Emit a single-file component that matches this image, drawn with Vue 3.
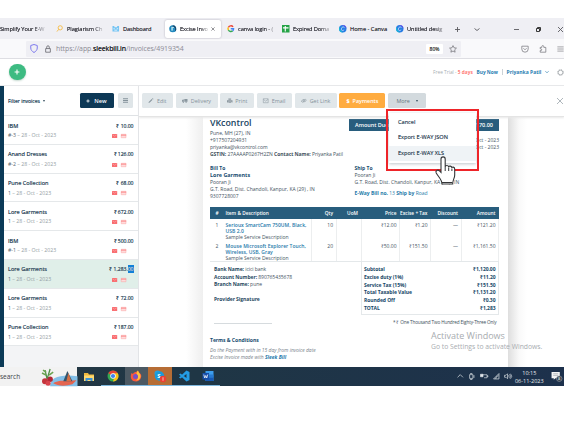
<script setup>
const tabs = [
  { icon: 'none', text: 'Simplify Your E-W', cls: 't0' },
  { icon: 'mag', text: 'Plagiarism Ch', cls: 't1' },
  { icon: 'dash', text: 'Dashboard', cls: 't2' },
  { icon: 'bill', text: 'Excise Invo', cls: 't3 active' },
  { icon: 'google', text: 'canva login - (', cls: 't4' },
  { icon: 'sheet', text: 'Expired Doma', cls: 't5' },
  { icon: 'canva', text: 'Home - Canva', cls: 't6' },
  { icon: 'canva', text: 'Untitled desig', cls: 't7' },
]
const invoices = [
  { name: 'IBM', no: '#-3', amount: '10.00' },
  { name: 'Anand Dresses', no: '#-2', amount: '126.00' },
  { name: 'Pune Collection', no: '1', amount: '68.00' },
  { name: 'Lore Garments', no: '1', amount: '672.00' },
  { name: 'IBM', no: '#-1', amount: '500.00' },
  { name: 'Lore Garments', no: '1', amount: '1,283.', picked: '00' },
  { name: 'Lore Garments', no: '1', amount: '72.00' },
  { name: 'Pune Collection', no: '1', amount: '187.00' },
]
const items = [
  { n: 1, a: 'Serioux SmartCam 750UM, Black,', b: 'USB 2.0', qty: 10, price: '₹12.00', tax: '₹1.20', total: '₹121.20' },
  { n: 2, a: 'Mouse Microsoft Explorer Touch,', b: 'Wireless, USB, Gray', qty: 20, price: '₹50.00', tax: '₹151.50', total: '₹1,161.50' },
]
const totals = [
  ['Subtotal', '₹1,120.00'],
  ['Excise duty (1%)', '₹11.20'],
  ['Service Tax (15%)', '₹151.50'],
  ['Total Taxable Value', '₹1,131.20'],
  ['Rounded Off', '₹0.30'],
  ['TOTAL', '₹1,283'],
]
</script>

<template>
  <div class="screen">
    <div class="tabs">
      <div v-for="(t, i) in tabs" :key="i" class="tab" :class="t.cls">
        <svg v-if="t.icon !== 'none'" class="fav" viewBox="0 0 16 16">
          <g v-if="t.icon === 'mag'" fill="none" stroke="#f5bd4a" stroke-width="2"><circle cx="9" cy="6" r="4.5" /><path d="M6 9l-4 5" /></g>
          <g v-if="t.icon === 'dash'"><path d="M1 2h4v3h6V2h4v12H1z" fill="#74c4f3" /><path d="M3 8h3M10 8h3M5 11h6" stroke="#fff" stroke-width="1.6" /></g>
          <g v-if="t.icon === 'bill'"><circle cx="8" cy="8" r="7.5" fill="#2087bb" /><path d="M8 .5a7.5 7.5 0 0 1 5 13L8 8z" fill="#15456c" /><path d="M5 4h6v8H5z" fill="#bfe9f3" /><path d="M8 6h5v8H8z" fill="#278dc2" /></g>
          <g v-if="t.icon === 'google'" fill="none" stroke-width="3"><path d="M13 4A6 6 0 0 0 3 5" stroke="#ea4335" /><path d="M3 5a6 6 0 0 0 0 6" stroke="#fbbc05" /><path d="M3 11a6 6 0 0 0 9 1.5" stroke="#34a853" /><path d="M12 12.5A6 6 0 0 0 14 8H8" stroke="#4285f4" /></g>
          <g v-if="t.icon === 'sheet'"><path d="M0 0h16v16H0z" fill="#25a346" /><path d="M7 2v12M2 6h12" stroke="#fff" stroke-width="2.4" /></g>
          <g v-if="t.icon === 'canva'"><circle cx="8" cy="8" r="8" fill="#287de4" /><path d="M1 4a8 8 0 0 0 8 12C4 13 2 9 1 4z" fill="#12c1d4" /><path d="M6 .3A8 8 0 0 1 15.9 8C13 3 10 1 6 .3z" fill="#7542e8" /><path d="M11 6c0-4-6-2-6 3 0 4 5 3 6 1" fill="none" stroke="#dff1ff" stroke-width="1.4" /></g>
        </svg>
        <span class="tab-text">{{ t.text }}</span>
        <svg v-if="t.icon === 'bill'" class="close" viewBox="0 0 10 10"><path d="M1 1l8 8M9 1l-8 8" /></svg>
      </div>
      <svg class="wbtn plus" viewBox="0 0 10 10"><path d="M5 0v10M0 5h10" /></svg>
      <svg class="wbtn chev" viewBox="0 0 10 10"><path d="M0 3l5 4 5-4" /></svg>
      <svg class="wbtn min" viewBox="0 0 10 10"><path d="M0 5h10" /></svg>
      <svg class="wbtn max" viewBox="0 0 10 10"><path d="M1 3h6v6H1zM3 3V1h6v6H7" /></svg>
      <svg class="wbtn cls" viewBox="0 0 10 10"><path d="M0 0l10 10M10 0L0 10" /></svg>
    </div>

    <div class="urlbar">
      <div class="field">
        <svg class="shield" viewBox="0 0 16 18"><path d="M8 1l6.5 2v5c0 4-3 7-6.5 9-3.500-2-6.500-5-6.500-9V3z" fill="none" stroke="#7f7bee" stroke-width="2" /></svg>
        <svg class="lock" viewBox="0 0 14 18"><path d="M1.500 8h11v8.500h-11zM4 8V4.500a3 3 0 0 1 6 0V8" fill="none" stroke="#626269" stroke-width="1.800" /></svg>
        <span class="url">https://app.<b>sleekbill.in</b>/invoices/4919354</span>
        <span class="zoom">80%</span>
        <svg class="star" viewBox="0 0 20 20"><path d="M10 1.500l2.600 5.500 6 .8-4.400 4.200 1.100 6-5.300-2.900L4.700 18l1.100-6L1.400 7.800l6-.8z" fill="none" stroke="#66666c" stroke-width="1.700" /></svg>
      </div>
      <svg class="pocket" viewBox="0 0 20 20"><path d="M2 3h16v7a8 8 0 0 1-16 0zM6 8l4 4 4-4" /></svg>
      <svg class="puzzle" viewBox="0 0 20 20"><path d="M3 6h4V4a2.500 2.500 0 0 1 5 0v2h5v12H3v-4h2a2.300 2.300 0 0 0 0-4.500H3z" /></svg>
      <svg class="burger" viewBox="0 0 20 20"><path d="M1 4h18M1 10h18M1 16h18" /></svg>
    </div>

    <header class="apphead">
      <div class="add"><svg viewBox="0 0 10 10"><path d="M5 1v8M1 5h8" /></svg></div>
      <div class="account">
        <span class="trial">Free Trial - <b>5 days</b></span><b class="buy">Buy Now</b><i class="bar"></i><b class="user">Priyanka Patil</b>
        <svg class="uchev" viewBox="0 0 10 10"><path d="M1 3l4 4 4-4" /></svg>
        <svg class="gear" viewBox="0 0 20 20"><circle cx="10" cy="10" r="6.500" /><circle cx="10" cy="10" r="8.500" stroke-dasharray="3.300 3.380" /></svg>
      </div>
    </header>

    <div class="work">
      <div class="rail"></div>
      <aside class="side">
        <div class="sidehead">
          <span class="filter">Filter invoices</span><i class="tri"></i>
          <div class="new"><svg viewBox="0 0 10 10"><path d="M5 1v8M1 5h8" /></svg>New</div>
          <div class="listbtn"><svg viewBox="0 0 10 10"><path d="M0 1.500h10M0 5h10M0 8.500h10" /></svg></div>
        </div>
        <div v-for="(v, i) in invoices" :key="i" class="inv" :class="{ sel: v.picked }">
          <div class="l1"><span>{{ v.name }}</span><span class="amt">₹ {{ v.amount }}<em v-if="v.picked">{{ v.picked }}</em></span></div>
          <div class="l2">
            <span><b>{{ v.no }}</b> – 28 - Oct - 2023</span>
            <span class="marks">
              <svg viewBox="0 0 12 9"><path d="M0 0h12v9H0z" fill="#f9696c" /><path d="M1 2l5 3 5-3" fill="none" stroke="#ffd0d0" /></svg>
              <svg viewBox="0 0 12 9"><path d="M.5.5h11v8H.5z" fill="#ffdcdc" stroke="#fb9999" /><path d="M0 2.500h12" stroke="#f97c7e" stroke-width="2" /></svg>
            </span>
          </div>
        </div>
      </aside>

      <main class="main">
        <div class="toolbar">
          <div class="tb b1"><svg viewBox="0 0 12 12"><path d="M1 11l1-3 6-6 2 2-6 6zM9 1l1-1 2 2-1 1z" /></svg>Edit</div>
          <div class="tb b2"><svg viewBox="0 0 12 12"><path d="M5 2h7v6H5zM0 5l2-2h2v5H0z" /><circle cx="3" cy="9" r="1.500" /><circle cx="9" cy="9" r="1.500" /></svg>Delivery</div>
          <div class="tb b3"><svg viewBox="0 0 12 12"><path d="M3 1h6v3H3zM0 5h12v5h-2V8H2v2H0zM3 9h6v2H3z" /></svg>Print</div>
          <div class="tb b4"><svg viewBox="0 0 12 12"><path d="M.7 1.700h10.600v8.600H.7zM1 3l5 4 5-4" fill="none" stroke="#8a979f" stroke-width="1.200" /></svg>Email</div>
          <div class="tb b5"><svg viewBox="0 0 14 12"><g fill="none" stroke="#8a979f" stroke-width="1.500"><rect x="1" y="4" width="8" height="5" rx="2.500" transform="rotate(-25 5 6)" /><rect x="5" y="3" width="8" height="5" rx="2.500" transform="rotate(-25 9 5)" /></g></svg>Get Link</div>
          <div class="tb b6"><b>$</b>Payments</div>
          <div class="tb b7">More<i class="tri"></i></div>
          <svg class="x" viewBox="0 0 10 10"><path d="M0 0l10 10M10 0L0 10" /></svg>
        </div>

        <div class="canvas">
          <article class="paper">
            <section class="top">
              <div class="from">
                <h1>VKcontrol</h1>
                <p>Pune, MH (27), IN</p><p>+917507204931</p><p>priyanka@vkcontrol.com</p>
                <p class="gst"><b>GSTIN:</b> 27AAAAP0267H2ZN <b>Contact Name:</b> Priyanka Patil</p>
              </div>
              <div class="due">
                <div class="duebar"><span>Amount Due:</span><span>₹1,170.00</span></div>
                <p>28 - Oct - 2023</p><p>28 - Oct - 2023</p>
              </div>
            </section>
            <section class="parties">
              <div class="bill"><p class="hd">Bill To</p><p class="hd nm">Lore Garments</p><p>Pooran Ji</p><p class="addr">G.T. Road, Dist. Chandoli, Kanpur, KA (29) , IN</p><p>9307728007</p></div>
              <div class="ship"><p class="hd">Ship To</p><p>Pooran Ji</p><p class="addr">G.T. Road, Dist. Chandoli, Kanpur, KA (29) , IN</p><p class="way"><b>E-Way Bill no.</b> 13 <b>Ship by</b> Road</p></div>
            </section>
            <section class="grid head"><span class="c">#</span><span class="l">Item &amp; Description</span><span>Qty</span><span>UoM</span><span>Price</span><span>Excise + Tax</span><span>Discount</span><span>Amount</span></section>
            <section v-for="r in items" :key="r.n" class="grid row">
              <span class="c">{{ r.n }}</span>
              <span class="l"><p class="blue">{{ r.a }}</p><p class="blue">{{ r.b }}</p><p>Sample Service Description</p></span>
              <span>{{ r.qty }}</span><span></span><span>{{ r.price }}</span><span>{{ r.tax }}</span><span>—</span><span>{{ r.total }}</span>
            </section>
            <section class="bottom">
              <div class="bank">
                <p><b>Bank Name:</b> icici bank</p><p class="acct"><b>Account Number:</b> 890765435678</p><p><b>Branch Name:</b> pune</p>
                <p class="sign"><b>Provider Signature</b></p>
              </div>
              <div class="totals"><div v-for="t in totals" :key="t[0]" class="tot"><span>{{ t[0] }}</span><span>{{ t[1] }}</span></div></div>
            </section>
            <p class="words">* ₹ One Thousand Two Hundred Eighty-Three Only</p>
            <section class="terms"><p class="hd">Terms &amp; Conditions</p><p class="it">Do the Payment with in 15 day from invoice date</p><p class="it">Excise Invoice made with <b>Sleek Bill</b></p></section>
          </article>
        </div>
      </main>
    </div>

    <footer class="taskbar">
      <div class="search">search</div>
      <svg class="art" viewBox="0 0 36 19">
        <path d="M9 19c0-9 10-12 27-10v10z" fill="#83bfe8" /><path d="M12 16c6-4 16-2 23-3l-4 4c-7 2-14 2-19-1z" fill="#e56550" />
        <path d="M22 14l4-10 5 10z" fill="#34566d" /><path d="M27 6l3 8h-5z" fill="#d67045" />
        <path d="M4 3l2 9M9 2L6 12" stroke="#4f8e46" fill="none" stroke-width="1.300" /><path d="M1 6l4 2M12 5L8 8M2 3l3 2" stroke="#6aa450" stroke-width="1.600" />
        <circle cx="4" cy="14" r="3" fill="#c4343b" /><circle cx="9" cy="12" r="2.700" fill="#b02836" /><circle cx="7" cy="16" r="2.500" fill="#d7434b" />
      </svg>
      <div class="app"><svg viewBox="0 0 24 24"><path d="M2 4h8l2 3h10v13H2z" fill="#eeb83f" /><path d="M2 9h20v11H2z" fill="#ffd970" /><path d="M5 14h14v6h-4v-2H9v2H5z" fill="#3b92d5" /></svg></div>
      <div class="app run"><svg viewBox="0 0 24 24"><circle cx="12" cy="12" r="11" fill="#35a852" /><path d="M2.500 6.500a11 11 0 0 1 19 0L12 12z" fill="#e84336" /><path d="M21.500 6.500A11 11 0 0 1 12 23l3-9-3-7.500z" fill="#fbc116" /><circle cx="12" cy="12" r="5.500" fill="#fff" /><circle cx="12" cy="12" r="4.200" fill="#3f83ed" /></svg></div>
      <div class="app run fire"><svg viewBox="0 0 24 24"><path d="M3 6l3 2c1-3 4-4 6-4 1-1 3-2 4-3 0 3 4 5 6 8 2 6-2 14-10 14S-1 16 3 6z" fill="#fb583d" /><path d="M16 1c1 4 6 7 5 13-1 5-5 7-9 7 5-4 5-9 1-13 0-3 1-5 3-7z" fill="#ffc43c" /><circle cx="11" cy="13" r="5" fill="#7552c9" /></svg></div>
      <div class="app run skype"><svg viewBox="0 0 24 24"><circle cx="7" cy="7" r="6" fill="#279fdc" /><circle cx="11" cy="12" r="9.500" fill="#189bda" /><text x="6.500" y="16" class="ic">S</text><circle cx="18" cy="18" r="6.500" fill="#ed3f34" /><path d="M18 14.500v7" stroke="#fff" stroke-width="1.300" /></svg></div>
      <div class="app run"><svg viewBox="0 0 24 24"><path d="M17 1l6 3v16l-6 3L2 9l3-2 12 9V8L5 17l-3-2z" fill="#249de5" /></svg></div>
      <div class="app run"><svg viewBox="0 0 24 24"><path d="M7 2h16v20H7z" fill="#3d9ded" /><path d="M7 9h16v6H7z" fill="#267ad2" /><path d="M7 15h16v7H7z" fill="#1859b4" /><path d="M1 6h13v13H1z" fill="#164da9" /><path d="M3.500 9l2 7 2-5 2 5 2-7" fill="none" stroke="#fff" stroke-width="1.500" /></svg></div>
      <div class="tray">
        <svg viewBox="0 0 12 12"><path d="M1 8l5-5 5 5" /></svg>
        <svg viewBox="0 0 12 12"><path d="M3 3h6v7H3zM4 1h4M4 12h4M11 4v5" /></svg>
        <svg class="wide" viewBox="0 0 16 12"><path d="M5 3h9v6H8M14 5h2v2h-2" /><path d="M1 2h5v5H1z" fill="#e0e5e9" /></svg>
        <svg viewBox="0 0 12 12"><path d="M1 11L11 1v10zM5 11a6 6 0 0 1 5-6" /></svg>
        <svg class="wide" viewBox="0 0 16 12"><path d="M1 4h3l3-3v10L4 8H1zM9 4q2 2 0 4M11 2q4 4 0 8M13 1q5 5 0 10" /></svg>
      </div>
      <div class="clock"><span>10:15</span><span>06-11-2023</span></div>
      <div class="note"><svg viewBox="0 0 20 20"><path d="M1 2h15v11H8l-3 3v-3H1z" fill="#f4f4f4" /><path d="M4 5h9M4 8h9" stroke="#8b929a" /><circle cx="15" cy="14" r="5" fill="#333e49" stroke="#aab1b8" /><text x="12.800" y="17" class="badge">8</text></svg></div>
    </footer>

    <div class="menu"><div>Cancel</div><div class="json">Export E-WAY JSON</div><div class="hot">Export E-WAY XLS</div></div>
    <div class="redbox"></div>
    <svg class="hand" viewBox="0 0 21 29"><path d="M6 16.500V3a2 2 0 0 1 4.200 0v8c0-2 3.500-2 3.500.3 0-1.800 3.200-1.600 3.200.7 0-1.500 2.800-1.200 2.800 1v6c0 3.500-2 4.500-2 9H7c0-4.500-3.500-7-5.800-11-1.200-2.400 1.800-3.800 3.300-2z" fill="#fff" stroke="#343638" stroke-width="1.100" /><path d="M10.200 11v4M13.700 11.500V15M16.900 12.500V15M7 26.500h10.500" fill="none" stroke="#343638" /></svg>
    <div class="activate"><div class="a1">Activate Windows</div><div class="a2">Go to Settings to activate Windows.</div></div>
  </div>
</template>

<style>
body { margin: 0; background: #fff; }
</style>

<style scoped>
.screen { position: relative; width: 564px; height: 443px; padding-top: 18px; box-sizing: border-box; overflow: hidden; background: #fff; font-family: "Open Sans", sans-serif; color: #43525e; white-space: nowrap; }
.screen * { box-sizing: border-box; }
p, h1 { margin: 0; }
svg { display: block; flex: none; overflow: visible; }

.tabs { height: 21px; background: #efeff4; display: flex; align-items: center; font-size: 5.700px; padding-top: 1px; }
.tab { display: flex; align-items: center; height: 18px; flex: none; color: #3b3b43; text-shadow: 0 0 .3px #3b3b43; }
.fav { width: 7.500px; height: 7.500px; margin-right: 3.500px; }
.tab-text { flex: none; -webkit-mask-image: linear-gradient(90deg, #000 72%, rgba(0, 0, 0, .15)); }
.t0 { width: 56px; } .t0 .tab-text { width: 45px; letter-spacing: -.12px; }
.t1 { width: 56px; } .t1 .tab-text { width: 36px; letter-spacing: -.05px; }
.t2 { width: 53px; } .t2 .tab-text { width: 29px; -webkit-mask-image: none; letter-spacing: -.12px; }
.t3 { width: 56px; padding-left: 4px; margin-right: 6px; } .t3 .tab-text { width: 28px; letter-spacing: -.1px; }
.t4 { width: 55px; } .t4 .tab-text { width: 37px; letter-spacing: -.07px; }
.t5 { width: 57px; } .t5 .tab-text { width: 37px; letter-spacing: -.1px; }
.t6 { width: 57px; } .t6 .tab-text { width: 39px; -webkit-mask-image: none; }
.t7 { width: 59px; } .t7 .tab-text { width: 38px; letter-spacing: -.1px; }
.active { background: #fff; border-radius: 2px; box-shadow: 0 0 2px #aaa9b3; }
.close { width: 4px; height: 4px; margin-left: 2.500px; stroke: #4c4c52; fill: none; stroke-width: 1.500; }
.wbtn { fill: none; stroke: #5a5a60; stroke-width: 1.800; width: 5px; height: 5px; }
.plus { margin-left: -.5px; } .chev { margin-left: 14px; width: 6px; } .min { margin-left: 34.500px; } .max { margin-left: 17px; stroke: #222; } .cls { margin-left: 17px; }

.urlbar { height: 20px; background: #f9f9fb; border-bottom: 1px solid #dedee3; display: flex; align-items: center; }
.field { margin-left: 26px; width: 435px; height: 16px; background: #efeff4; border-radius: 1px; display: flex; align-items: center; }
.shield { width: 8px; height: 9px; margin-left: 4px; } .lock { width: 6px; height: 8px; margin-left: 7px; }
.url { margin-left: 5px; width: 368px; font-size: 6.950px; letter-spacing: -.07px; color: #8b8b94; } .url b { font-weight: 400; color: #25252c; text-shadow: 0 0 .3px #222; }
.zoom { width: 17px; height: 10px; line-height: 10px; background: #fff; text-align: center; font-size: 5px; border-radius: 1px; color: #333; text-shadow: 0 0 .3px #333; margin-left: 2px; }
.star { width: 8px; height: 8px; margin-left: 6px; }
.pocket, .puzzle, .burger { width: 8px; height: 8px; fill: none; stroke: #6c6c72; stroke-width: 1.700; }
.pocket { margin-left: 60px; } .puzzle { margin-left: 10px; } .burger { margin-left: 9.500px; width: 7px; }

.apphead { height: 27px; background: #fff; display: flex; align-items: center; justify-content: space-between; border-bottom: 1px solid #e7e8ea; padding-left: 9px; }
.add { width: 16.500px; height: 16.500px; border-radius: 50%; background: #3dbb82; display: grid; place-items: center; box-shadow: 0 1px 2px #c5d9cf; }
.add svg { width: 6px; height: 6px; stroke: #fff; stroke-width: 1.800; }
.account { display: flex; align-items: center; width: 131px; font-size: 4.800px; color: #a8aeb3; }
.trial { width: 43.500px; } .trial b { color: #ff7b78; } .buy { color: #2a7eb2; width: 25.500px; } .bar { width: 1px; height: 6px; background: #ccd2d6; } .user { color: #2a7eb2; margin-left: 3.500px; width: 38px; font-size: 5px; }
.uchev { width: 4px; height: 4px; stroke: #3987b5; fill: none; stroke-width: 1.800; margin-left: 0; } .gear { width: 7px; height: 7px; stroke: #979ca1; fill: none; stroke-width: 2; margin-left: 8px; }

.work { height: 281px; display: flex; }
.rail { width: 4px; background: #0b3a57; }
.side { width: 134.500px; background: #f3f4f6; border-right: 1px solid #e2e4e7; }
.sidehead { height: 30px; background: #fff; display: flex; align-items: center; padding-left: 4px; border-bottom: 1px solid #dfe2e5; }
.filter { font-size: 5.050px; width: 33.500px; color: #2c495e; text-shadow: 0 0 .3px #2c495e; }
.tri { width: 0; height: 0; border: 1.700px solid transparent; border-top: 2.500px solid #354d5e; border-bottom: 0; margin-left: 1.500px; }
.new { margin-left: 34.500px; width: 34px; height: 15.500px; background: #0d3856; border-radius: 1.500px; color: #fff; display: flex; align-items: center; justify-content: center; gap: 4px; font-size: 5.700px; font-weight: 600; }
.new svg { width: 4px; height: 4px; stroke: #fff; stroke-width: 2; }
.listbtn { margin-left: 4px; width: 15px; height: 15px; background: #dfe5e8; border-radius: 1.500px; display: grid; place-items: center; }
.listbtn svg { width: 5px; height: 5px; stroke: #657681; stroke-width: 1.500; }
.inv { height: 28.800px; background: #fff; border-bottom: 1px solid #e5e8ea; padding: 5.500px 4px 0; }
.sel { background: #e0efe9; }
.l1, .l2 { display: flex; justify-content: space-between; align-items: center; height: 9.600px; line-height: 9.600px; }
.l1 { font-size: 5.600px; color: #344d5f; text-shadow: 0 0 .2px #344d5f; } .amt { font-size: 5.100px; letter-spacing: -.03px; } .amt em { background: #1180d8; color: #fff; font-style: normal; padding: 1px 0; }
.l2 { font-size: 5.200px; color: #939ca3; } .l2 b { font-weight: 400; color: #566570; }
.marks { display: flex; gap: 4px; padding-right: 7.500px; } .marks svg { width: 5.200px; height: 4px; }

.main { flex: 1; min-width: 0; }
.toolbar { position: relative; height: 30.500px; display: flex; align-items: center; padding-left: 3.500px; border-bottom: 1px solid #e4e4e4; box-shadow: 0 1px 2px #e8e8e8; }
.tb { height: 15px; margin-right: 2.700px; background: #e1e7ea; border-radius: 1.500px; display: flex; align-items: center; justify-content: center; gap: 3px; font-size: 5.400px; color: #84919a; }
.tb svg { width: 5.500px; height: 5.500px; fill: #8a979f; }
.b1 { width: 31px; } .b2 { width: 42px; } .b3 { width: 33.500px; } .b4 { width: 35.500px; } .b5 { width: 42px; } .b6 { width: 46px; background: #ffac40; color: #fff; font-weight: 600; } .b7 { width: 38px; background: #d3dade; color: #667680; }
.b7 .tri { margin-left: 3px; }
.x { width: 6px; height: 6px; stroke: #909ba2; stroke-width: 1.200; margin-left: 128px; }

.canvas { height: 250.500px; display: flex; background: linear-gradient(90deg, #fff 0 47px, #efefef 64px, #fff 64px 369px, #dedede 369px, #f9f9f9 380px, #fff 388px); }
.paper { margin-left: 63.500px; width: 305.500px; padding: 1.500px 8.500px 0 8px; font-size: 5px; line-height: 7px; }
.top { display: flex; height: 47px; justify-content: space-between; }
h1 { font-size: 8.800px; line-height: 11px; font-weight: 600; color: #174261; }
.from h1 { margin-bottom: .8px; } .gst { letter-spacing: -.04px; }
.due { width: 150px; text-align: right; line-height: 7.200px; } .duebar { height: 12.500px; line-height: 12.500px; display: flex; justify-content: space-between; background: #285d7d; color: #fff; padding: 0 6px; font-weight: 600; margin: .5px 0 6.200px; font-size: 5.500px; }
.parties { display: grid; grid-template-columns: 144.500px 1fr; height: 42px; } .hd { color: #174d70; font-weight: 700; } .nm { font-size: 5.400px; } .way { color: #257aa9; margin-top: 3.800px; }
.grid { display: grid; grid-template-columns: 14px 87.500px 25px 25px 38.500px 31px 30.500px 37.500px; text-align: right; }
.grid > span { padding-right: 2.500px; border-right: 1px solid #eceeef; } .grid > .c { text-align: center; padding: 0; border: 0; } .grid > .l { text-align: left; padding: 0 0 0 1.500px; }
.head { height: 12px; line-height: 12px; background: #285d7d; color: #fff; font-weight: 600; font-size: 4.800px; } .head > span { border-color: #285d7d; }
.row { height: 20.300px; padding-top: 3.300px; line-height: 6.100px; } .row + .row { height: 23px; border-bottom: 1px solid #e4e8ea; } .row > span { margin-top: -3.300px; padding-top: 3.300px; }
.row > .l, .row > .c { padding-top: 3.300px; } .blue { color: #2679aa; font-weight: 600; letter-spacing: .03px; }
.bottom { display: flex; justify-content: space-between; height: 52.500px; } .bank { padding: 4.200px 0 0 4px; line-height: 7.100px; } .bank b { color: #28495f; font-weight: 700; } .bank .sign { margin-top: 8.200px; width: 58px; height: 28px; border-bottom: 1px solid #d6dbde; }
.bank p { letter-spacing: -.05px; } .bank .sign { margin-bottom: -8px; }
.totals { width: 138.500px; border: 1px solid #e4e8ea; border-top: 0; padding: 4px 2.500px 0; } .tot { display: flex; justify-content: space-between; height: 7.650px; line-height: 7.650px; color: #164667; font-weight: 700; letter-spacing: -.05px; }
.words { text-align: right; padding-right: 2.500px; height: 12px; line-height: 15px; font-size: 4.700px; letter-spacing: -.16px; }
.terms { padding-top: 9.800px; line-height: 7.500px; font-size: 4.950px; } .terms .hd { margin-bottom: 2.500px; font-size: 5.100px; letter-spacing: -.05px; } .it { font-style: italic; color: #78828a; } .it b { color: #2679aa; }

.taskbar { height: 19.300px; background: linear-gradient(90deg, #243744, #1f3645 35%, #1d314c); display: flex; align-items: stretch; color: #e9edf0; }
.taskbar > * { flex: none; }
.search { width: 40.500px; background: #f2f2f2; color: #3d4247; font-size: 6.500px; line-height: 20px; } .art { width: 36.500px; height: 19.300px; background: #f2f2f2; }
.app { width: 23.800px; display: flex; align-items: center; justify-content: center; } .app svg { width: 12px; height: 12px; } .run { border-bottom: 1px solid #80b9df; } .fire { background: #4c5963; } .skype { background: #b66d35; }
.ic { font: bold 12px "Open Sans"; fill: #fff; } .badge { font: 7px "Open Sans"; fill: #fff; }
.tray { margin-left: 237px; display: flex; align-items: center; gap: 5px; } .tray svg { width: 6.500px; height: 6.500px; fill: none; stroke: #dfe5e9; stroke-width: 1.300; } .tray .wide { width: 8px; }
.clock { margin-left: 2px; width: 30px; display: flex; flex-direction: column; justify-content: center; align-items: center; font-size: 5.500px; line-height: 8px; }
.note { margin-left: 6.500px; display: flex; align-items: center; } .note svg { width: 11px; height: 11px; }

.menu { position: absolute; left: 389px; top: 113px; width: 87px; height: 50px; background: #fff; box-shadow: 0 1px 3px #bfc5ca; font-size: 5.600px; color: #435565; text-shadow: 0 0 .2px #435565; padding-top: 2px; } .menu div { padding-left: 9px; height: 15.300px; line-height: 15.300px; } .menu .hot { background: #eff3f6; }
.redbox { position: absolute; left: 386px; top: 109px; width: 93px; height: 62px; border: 2px solid #ee2429; }
.hand { position: absolute; left: 434.500px; top: 156px; width: 21px; height: 29px; }
.activate { position: absolute; left: 431px; top: 329px; color: #a8acb0; } .a1 { font-size: 9px; line-height: 13px; } .a2 { font-size: 6.800px; line-height: 9px; }
</style>
